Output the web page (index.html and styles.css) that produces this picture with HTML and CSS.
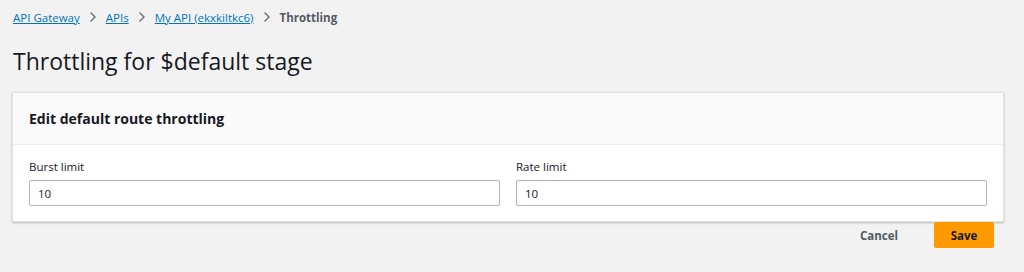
FILE: index.html
```html
<!DOCTYPE html>
<html lang="en">
	<head>
		<meta charset="UTF-8" />
		<meta name="viewport" content="width=device-width, initial-scale=1.0" />
		<title>Throttling</title>
		<link rel="stylesheet" href="styles.css">
	</head>

	<body>
		<div class="page">
			<nav class="breadcrumbs">
				<a href="#">API Gateway</a>
				<svg class="sep" width="8" height="12" viewBox="0 0 8 12"><polyline points="1.5,1.5 6,6 1.5,10.5" /></svg>
				<a href="#">APIs</a>
				<svg class="sep" width="8" height="12" viewBox="0 0 8 12"><polyline points="1.5,1.5 6,6 1.5,10.5" /></svg>
				<a href="#">My API (ekxkiltkc6)</a>
				<svg class="sep" width="8" height="12" viewBox="0 0 8 12"><polyline points="1.5,1.5 6,6 1.5,10.5" /></svg>
				<span class="current">Throttling</span>
			</nav>
			<h1>Throttling for $default stage</h1>
			<div class="card">
				<div class="card-header">
					<h2>Edit default route throttling</h2>
				</div>
				<div class="card-body">
					<div class="form-group">
						<label for="burst">Burst limit</label>
						<input type="text" id="burst" value="10" />
					</div>
					<div class="form-group">
						<label for="rate">Rate limit</label>
						<input type="text" id="rate" value="10" />
					</div>
				</div>
			</div>
			<div class="actions">
				<button class="btn-link">Cancel</button>
				<button class="btn-primary">Save</button>
			</div>
		</div>
	</body>
</html>
```

FILE: styles.css
```css
body {
	margin: 0;
	font-family: 'Open Sans', Arial, sans-serif;
	background-color: #f2f2f2;
	color: #16191f;
}
.page {
	padding: 8px 20px 0 12px;
}
.breadcrumbs {
	display: flex;
	align-items: center;
	gap: 9px;
	height: 18px;
	padding-left: 1px;
	font-size: 11.5px;
}
.breadcrumbs a {
	color: #0073bb;
	text-decoration: underline;
}
.breadcrumbs .sep {
	fill: none;
	stroke: #687078;
	stroke-width: 1.4;
}
.breadcrumbs .current {
	color: #545b64;
	font-weight: bold;
}
h1 {
	margin: 19px 0 0 1px;
	font-size: 23px;
	font-weight: 400;
	line-height: 32px;
	height: 32px;
}
.card {
	margin-top: 15px;
	background-color: white;
	border: 1px solid #e4e4e4;
	box-shadow: 0 1px 2px rgba(0, 0, 0, 0.25);
}
.card-header {
	background-color: #fafafa;
	border-bottom: 1px solid #eaeded;
	height: 51px;
	display: flex;
	align-items: center;
	padding: 0 16px;
}
.card-header h2 {
	margin: 0;
	font-size: 14px;
	font-weight: bold;
}
.card-body {
	display: grid;
	grid-template-columns: 1fr 1fr;
	gap: 16px;
	padding: 14px 16px 15px;
}
label {
	display: block;
	font-size: 11.5px;
	line-height: 16px;
	margin-bottom: 5px;
	color: #16191f;
}
input[type='text'] {
	width: 100%;
	box-sizing: border-box;
	height: 26px;
	padding: 0 8px;
	border: 1px solid #aab7b8;
	border-radius: 2px;
	font-family: inherit;
	font-size: 11.5px;
	color: #16191f;
}
.actions {
	display: flex;
	justify-content: flex-end;
	align-items: center;
	gap: 14px;
	padding-right: 10px;
}
button {
	font-family: inherit;
	font-size: 11.5px;
	font-weight: bold;
	border: none;
	cursor: pointer;
	height: 26px;
}
.btn-link {
	background: none;
	color: #545b64;
	padding: 0 22px;
}
.btn-primary {
	background-color: #ff9900;
	color: #16191f;
	border-radius: 2px;
	width: 60px;
}
```
